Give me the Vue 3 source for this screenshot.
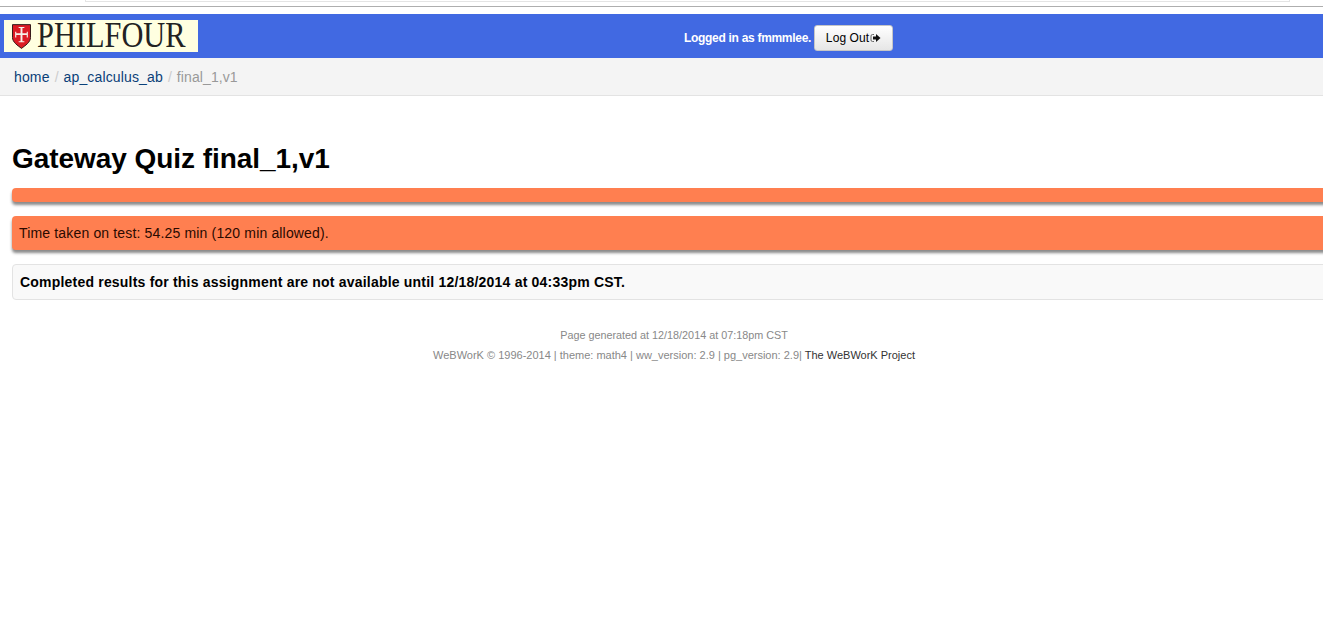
<template>
  <div class="page">
    <div class="chrome">
      <div class="chrome-field"></div>
    </div>

    <header class="masthead">
      <a class="logo">
        <svg class="shield" viewBox="0 0 20 26" width="19" height="25">
          <path d="M0.5 0.5H19.5V14C19.5 19 14 22.5 10 25.5C6 22.5 0.5 19 0.5 14Z" fill="#dc1c24" stroke="#2a1414" stroke-width="1" />
          <path d="M9 5V4H7V3h6v1h-2v5.500h4.500V8h1.200v6h-1.200v-2.500H11V18h2v1H7v-1h2v-6.500H4.500V14H3.300V8h1.200v1.500H9z" fill="#f6f2ea" />
        </svg>
        <svg class="logo-word" viewBox="0 0 180 32" width="152" height="32" preserveAspectRatio="none">
          <text x="0" y="27">PHILFOUR</text>
        </svg>
      </a>
      <div class="login">
        <span class="login-name">Logged in as fmmmlee.</span>
        <button class="logout">
          <span class="logout-label">Log Out</span>
          <svg class="logout-icon" viewBox="0 0 11 10" width="11" height="10">
            <path d="M4 1.500H2.500Q1 1.500 1 3V7Q1 8.500 2.500 8.500H4" fill="none" stroke="#666" stroke-width="1" />
            <path d="M3 3.500H6V1L10.500 5L6 9V6.500H3Z" fill="#111" />
          </svg>
        </button>
      </div>
    </header>

    <nav class="crumbs">
      <a>home</a>
      <span class="sep">/</span>
      <a>ap_calculus_ab</a>
      <span class="sep">/</span>
      <span class="current">final_1,v1</span>
    </nav>

    <main class="content">
      <h1>Gateway Quiz final_1,v1</h1>
      <div class="alert empty"></div>
      <div class="alert">Time taken on test: 54.25 min (120 min allowed).</div>
      <div class="well">Completed results for this assignment are not available until 12/18/2014 at 04:33pm CST.</div>
    </main>

    <footer class="foot">
      <p class="generated">Page generated at 12/18/2014 at 07:18pm CST</p>
      <p>WeBWorK © 1996-2014 | theme: math4 | ww_version: 2.9 | pg_version: 2.9| <a>The WeBWorK Project</a></p>
    </footer>
  </div>
</template>

<script setup>
</script>

<style>
html, body {
  margin: 0;
  overflow: hidden;
  background: #fff;
}
</style>

<style scoped>
.page {
  width: 1348px;
  min-height: 633px;
  font-family: "Liberation Sans", Arial, sans-serif;
  color: #000;
}

.chrome {
  height: 14px;
  box-sizing: border-box;
  padding-left: 85px;
  background: #fff;
}

.chrome-field {
  width: 1205px;
  height: 2px;
  box-sizing: border-box;
  border: 1px solid #e4e4e4;
  border-top: 0;
  margin-bottom: 4px;
}

.chrome::after {
  content: "";
  display: block;
  width: 1323px;
  margin-left: -85px;
  height: 1px;
  background: #aeaeae;
}

.masthead {
  height: 44px;
  background: #4169e2;
  display: flex;
  align-items: center;
}

.logo {
  width: 194px;
  height: 32px;
  margin-left: 4px;
  background: #ffffe0;
  display: flex;
  align-items: center;
  flex-shrink: 0;
}

.shield {
  margin-left: 8px;
  flex-shrink: 0;
}

.logo-word {
  margin-left: 6px;
  flex-shrink: 0;
  overflow: visible;
}

.logo-word text {
  font-family: "Liberation Serif", serif;
  font-size: 36px;
  fill: #222;
}

.login {
  margin-left: 486px;
  margin-top: 4px;
  display: flex;
  align-items: center;
  gap: 3px;
  font-size: 12px;
  color: #fff;
}

.login-name {
  font-weight: bold;
  letter-spacing: -0.3px;
}

.logout {
  width: 79px;
  height: 26px;
  padding: 0;
  box-sizing: border-box;
  border: 1px solid #c6c6c6;
  border-radius: 3px;
  background: linear-gradient(#fff, #e6e6e6);
  font-family: inherit;
  font-size: 12px;
  color: #000;
  display: flex;
  align-items: center;
  justify-content: center;
  gap: 1px;
}

.logout-label {
  letter-spacing: 0.1px;
}

.crumbs {
  height: 37px;
  background: #f4f4f4;
  border-bottom: 1px solid #e3e3e3;
  padding-left: 14px;
  display: flex;
  align-items: center;
  font-size: 14px;
}

.crumbs a {
  color: #0a4078;
  letter-spacing: 0.15px;
}

.sep {
  color: #ccc;
  margin: 0 5px;
}

.current {
  color: #999;
  letter-spacing: 0.1px;
}

.content {
  padding: 0 0 0 12px;
}

h1 {
  margin: 0;
  padding-top: 46px;
  height: 46px;
  font-size: 28px;
  line-height: 33px;
  font-weight: bold;
  letter-spacing: -0.05px;
}

.alert {
  background: #ff7f50;
  border-radius: 4px 0 0 4px;
  box-shadow: 0 3px 3px #8a8a8a;
  margin-bottom: 14px;
  padding: 9px 7px;
  height: 16px;
  line-height: 16px;
  font-size: 14px;
  letter-spacing: 0.16px;
  color: #2a0a00;
}

.alert.empty {
  height: 14px;
  padding: 0;
}

.well {
  box-sizing: border-box;
  height: 36px;
  background: #f9f9f9;
  border: 1px solid #e3e3e3;
  border-radius: 4px 0 0 4px;
  padding: 0 7px;
  line-height: 34px;
  font-size: 14px;
  font-weight: bold;
  letter-spacing: 0.2px;
}

.foot {
  margin-top: 28px;
  text-align: center;
  font-size: 11px;
  color: #888;
}

.foot p {
  margin: 0 0 6px;
  line-height: 14px;
}

.foot .generated {
  font-size: 10.800px;
}

.foot a {
  color: #333;
}
</style>
